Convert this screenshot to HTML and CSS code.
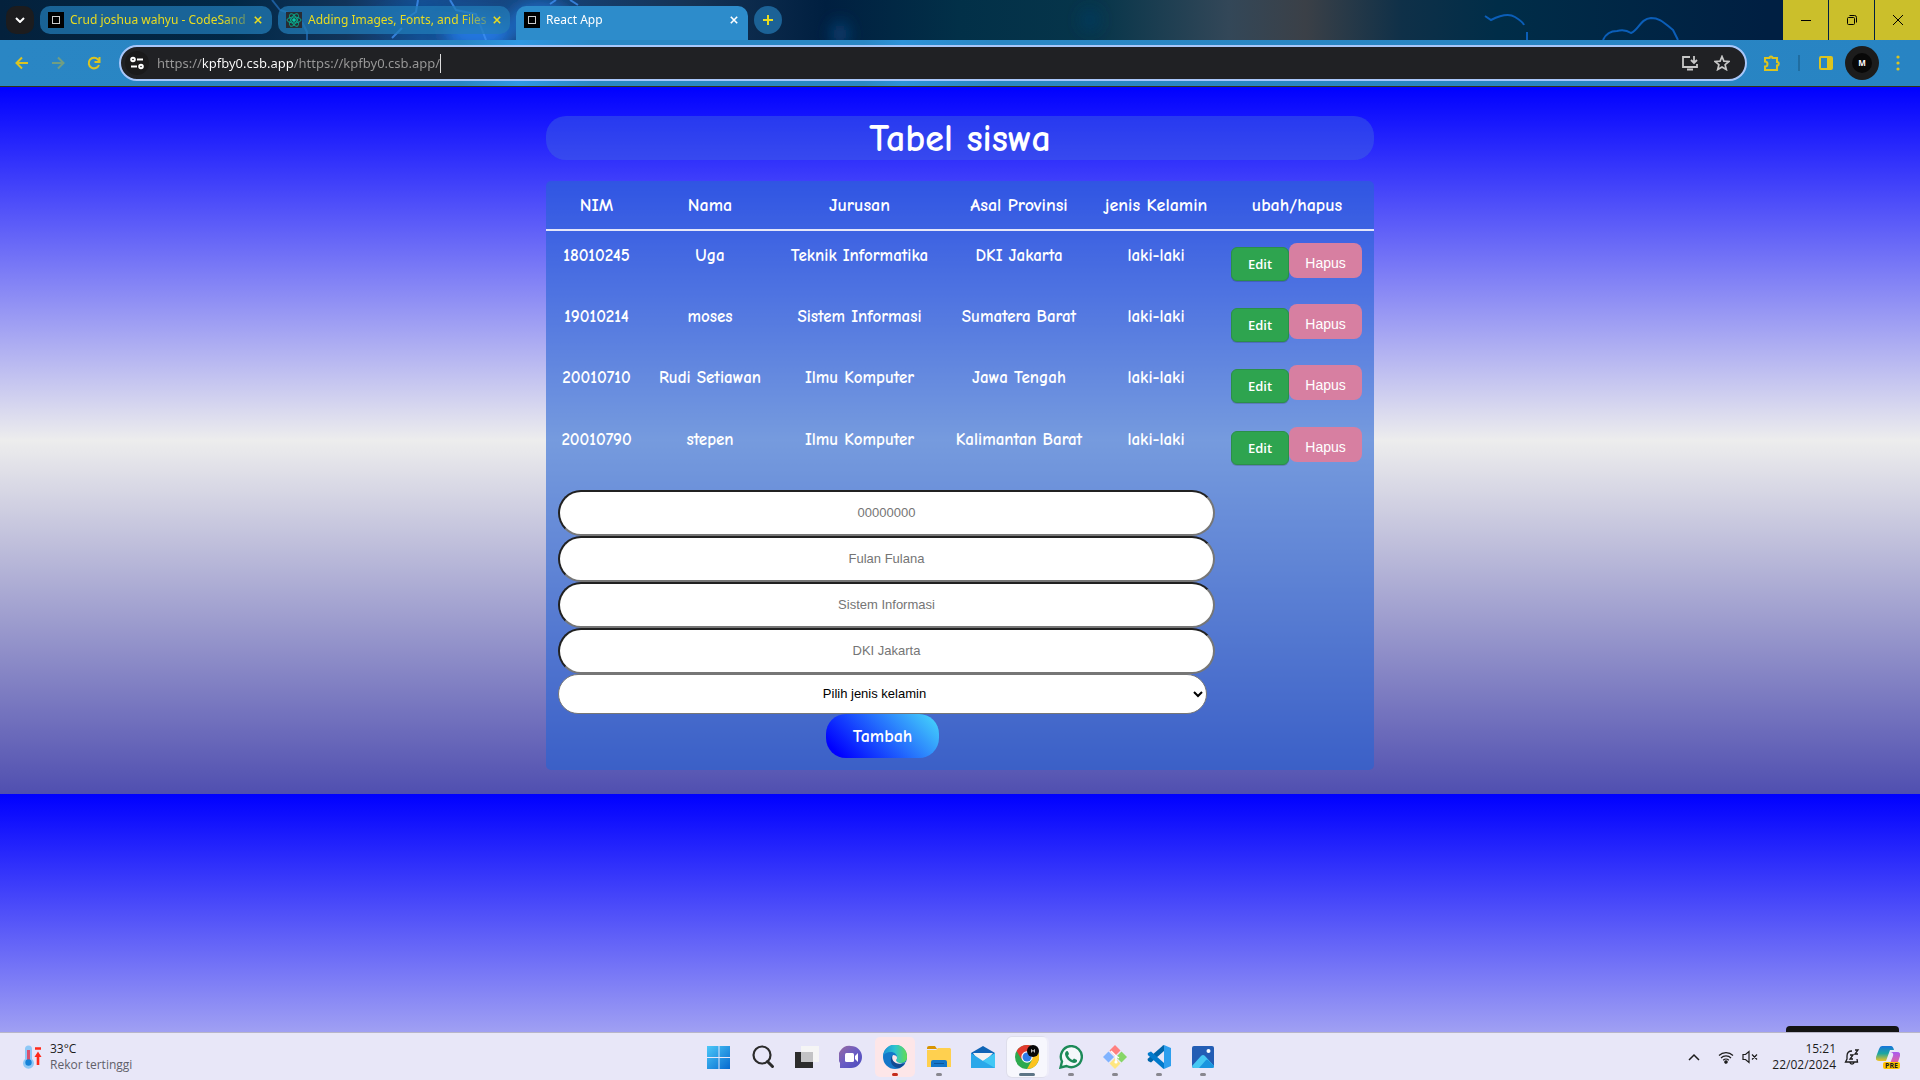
FILE: index.html
```html
<!DOCTYPE html>
<html lang="id">
<head>
<meta charset="utf-8">
<meta name="viewport" content="width=device-width, initial-scale=1">
<title>React App</title>
<link rel="stylesheet" href="styles.css">
</head>
<body>
<header class="browser">
  <svg class="wallpaper" viewBox="0 0 1920 40" preserveAspectRatio="none" aria-hidden="true" fill="none">
    <defs><filter id="soft" x="-50%" y="-50%" width="200%" height="200%"><feGaussianBlur stdDeviation="8"/></filter></defs>
    <g filter="url(#soft)"><ellipse cx="478" cy="34" rx="34" ry="16" fill="#2377e0"/><ellipse cx="420" cy="20" rx="40" ry="10" fill="#0e4f92"/><ellipse cx="540" cy="20" rx="30" ry="18" fill="#1e6dc8"/><ellipse cx="840" cy="34" rx="8" ry="12" fill="#08457c"/><ellipse cx="1090" cy="20" rx="8" ry="10" fill="#033b62"/></g>
    <g stroke="#3f8ff0" stroke-width="2"><path d="M418 0l-2 12-12 8M450 0l6 10 20 4 10 26M550 4l6-4M570 0l8 5M392 38l10-10" opacity=".8"/><path d="M272 0l8 10 12 4M302 22l5 10v8" stroke="#1c5c9c"/><path d="M1485 16l6 4q16-8 24-3t9 8M1527 32v8M1603 40q4-9 14-9 8-2 14 2c8-3 9-14 20-15 10 0 14 6 22 12l5 10" stroke="#0b5eb8"/></g>
  </svg>
  <div class="tabstrip">
    <button class="tab-search" aria-label="Cari tab"><svg width="10" height="6" viewBox="0 0 10 6"><path d="M1 1l4 4 4-4" stroke="#fff" stroke-width="2" fill="none"/></svg></button>
    <nav class="tabs" aria-label="Tab">
      <div class="tab">
        <span class="favicon"></span><a class="tab-title" href="#sandbox">Crud joshua wahyu - CodeSand</a>
        <button class="close" aria-label="Tutup tab"><svg width="10" height="10" viewBox="0 0 10 10"><path d="M1 1l8 8M9 1l-8 8" stroke="currentColor" stroke-width="2"/></svg></button>
      </div>
      <div class="tab">
        <svg width="16" height="16" viewBox="0 0 16 16" fill="none" stroke="#09a88b"><path fill="#282c34" stroke="none" d="M0 0h16v16H0z"/><ellipse cx="8" cy="8" rx="7" ry="3"/><ellipse cx="8" cy="8" rx="7" ry="3" transform="rotate(60 8 8)"/><ellipse cx="8" cy="8" rx="7" ry="3" transform="rotate(120 8 8)"/><circle cx="8" cy="8" r="1.5" fill="#09d3ac"/></svg>
        <a class="tab-title" href="#docs">Adding Images, Fonts, and Files</a>
        <button class="close" aria-label="Tutup tab"><svg width="10" height="10" viewBox="0 0 10 10"><path d="M1 1l8 8M9 1l-8 8" stroke="currentColor" stroke-width="2"/></svg></button>
      </div>
      <div class="tab tab-active">
        <span class="favicon"></span><a class="tab-title" href="#app">React App</a>
        <button class="close" aria-label="Tutup tab"><svg width="10" height="10" viewBox="0 0 10 10"><path d="M1 1l8 8M9 1l-8 8" stroke="currentColor" stroke-width="2"/></svg></button>
      </div>
    </nav>
    <button class="new-tab" aria-label="Tab baru"><svg width="10" height="10" viewBox="0 0 10 10"><path d="M5 0v10M0 5h10" stroke="currentColor" stroke-width="2"/></svg></button>
    <div class="window-buttons">
      <button aria-label="Kecilkan"><svg width="10" height="10" viewBox="0 0 10 10"><path d="M0 5.500h10" stroke="#000"/></svg></button>
      <button aria-label="Pulihkan"><svg width="10" height="10" viewBox="0 0 10 10" fill="none" stroke="#000"><rect x=".5" y="2.500" width="7" height="7" rx="1"/><path d="M2.500.5h5a2 2 0 012 2v5"/></svg></button>
      <button aria-label="Tutup"><svg width="10" height="10" viewBox="0 0 10 10"><path d="M0 0l10 10M10 0L0 10" stroke="#000"/></svg></button>
    </div>
  </div>
  <div class="toolbar">
    <div class="nav-buttons">
      <button aria-label="Kembali"><svg width="16" height="16" viewBox="0 0 16 16" fill="none" stroke="currentColor" stroke-width="2"><path d="M14 8H3M8 2.500L2.500 8 8 13.500"/></svg></button>
      <button class="dim" aria-label="Maju"><svg width="16" height="16" viewBox="0 0 16 16" fill="none" stroke="currentColor" stroke-width="2"><path d="M2 8h11M8 2.500l5.500 5.500L8 13.500"/></svg></button>
      <button aria-label="Muat ulang"><svg width="16" height="16" viewBox="0 0 16 16" fill="none" stroke="currentColor" stroke-width="2"><path d="M13 10a5.300 5.300 0 11-1-5.500L13.500 6M13.500 2v5h-5"/></svg></button>
    </div>
    <div class="omnibox">
      <button class="site-info" aria-label="Informasi situs"><svg width="14" height="14" viewBox="0 0 14 14" fill="none" stroke="#fff" stroke-width="2"><circle cx="3" cy="3.500" r="1.800"/><path d="M7 3.500h6M1 10.500h6"/><circle cx="11" cy="10.500" r="1.800"/></svg></button>
      <input class="url" type="text" aria-label="Alamat" size="46" value="https://kpfby0.csb.app/https://kpfby0.csb.app/"><span class="caret"></span>
      <div class="omnibox-actions">
        <button aria-label="Instal aplikasi"><svg width="16" height="16" viewBox="0 0 16 16" fill="none" stroke="currentColor" stroke-width="1.800"><path d="M8 2H1v10h14V9M12 1v6M9 5l3 3 3-3M5 14.500h6" /></svg></button>
        <button aria-label="Bookmark"><svg width="16" height="16" viewBox="0 0 16 16" fill="none" stroke="currentColor" stroke-width="1.700"><path d="M8 1.500l1.900 4.600 5 .4-3.800 3.200 1.200 4.800L8 11.900l-4.300 2.600 1.200-4.800L1.100 6.500l5-.4z"/></svg></button>
      </div>
    </div>
    <div class="extensions">
      <button aria-label="Ekstensi"><svg width="18" height="18" viewBox="0 0 18 18" fill="none" stroke="currentColor" stroke-width="2"><path d="M2 4h4.500a1.500 1.500 0 013 0H14v4a1.800 1.800 0 010 3.600V16H2v-3.500a2.500 2.500 0 000-5z"/></svg></button>
      <span class="divider"></span>
      <button aria-label="Panel samping"><svg width="14" height="14" viewBox="0 0 14 14"><rect x="1" y="1" width="12" height="12" rx="1" fill="none" stroke="currentColor" stroke-width="2"/><path d="M8 1h5v12H8z" fill="currentColor"/></svg></button>
      <button class="avatar" aria-label="Profil"><span>M</span></button>
      <button aria-label="Menu"><svg width="4" height="16" viewBox="0 0 4 16" fill="currentColor"><circle cx="2" cy="2" r="1.600"/><circle cx="2" cy="8" r="1.600"/><circle cx="2" cy="14" r="1.600"/></svg></button>
    </div>
  </div>
</header>

<main class="page">
  <div class="content">
    <h1>Tabel siswa</h1>
    <section class="card">
      <table>
        <colgroup><col class="c-nim"><col class="c-nama"><col class="c-jurusan"><col class="c-asal"><col class="c-jenis"><col class="c-aksi"></colgroup>
        <thead><tr><th>NIM</th><th>Nama</th><th>Jurusan</th><th>Asal Provinsi</th><th>jenis Kelamin</th><th>ubah/hapus</th></tr></thead>
        <tbody>
          <tr><td>18010245</td><td>Uga</td><td>Teknik Informatika</td><td>DKI Jakarta</td><td>laki-laki</td><td><div class="actions"><button class="edit">Edit</button><button class="delete">Hapus</button></div></td></tr>
          <tr><td>19010214</td><td>moses</td><td>Sistem Informasi</td><td>Sumatera Barat</td><td>laki-laki</td><td><div class="actions"><button class="edit">Edit</button><button class="delete">Hapus</button></div></td></tr>
          <tr><td>20010710</td><td>Rudi Setiawan</td><td>Ilmu Komputer</td><td>Jawa Tengah</td><td>laki-laki</td><td><div class="actions"><button class="edit">Edit</button><button class="delete">Hapus</button></div></td></tr>
          <tr><td>20010790</td><td>stepen</td><td>Ilmu Komputer</td><td>Kalimantan Barat</td><td>laki-laki</td><td><div class="actions"><button class="edit">Edit</button><button class="delete">Hapus</button></div></td></tr>
        </tbody>
      </table>
      <form class="student-form">
        <input type="text" aria-label="NIM" placeholder="00000000">
        <input type="text" aria-label="Nama" placeholder="Fulan Fulana">
        <input type="text" aria-label="Jurusan" placeholder="Sistem Informasi">
        <input type="text" aria-label="Asal Provinsi" placeholder="DKI Jakarta">
        <select aria-label="Jenis kelamin"><option>Pilih jenis kelamin</option></select>
        <button class="add" type="button">Tambah</button>
      </form>
    </section>
  </div>
  <div class="popup-edge"></div>
</main>

<footer class="taskbar">
  <button class="weather">
    <svg width="20" height="24" viewBox="0 0 20 24"><path d="M3 4a3.500 3.500 0 017 0v10a5.500 5.500 0 11-7 0z" fill="#8ec8f6"/><path d="M6.500 5v12" stroke="#d8516e" stroke-width="3"/><circle cx="6.500" cy="17.500" r="3.200" fill="#1683d8"/><path d="M13 3.500h6M16 20V9" stroke="#ff2a1a" stroke-width="2.600"/><path d="M12.500 12L16 6.500l3.500 5.500z" fill="#ff2a1a"/></svg>
    <span class="weather-text"><span>33°C</span><span class="muted">Rekor tertinggi</span></span>
  </button>
  <div class="apps">
    <button class="app" aria-label="Mulai"><svg width="24" height="24" viewBox="0 0 24 24"><defs><linearGradient id="win" x2="1" y2="1"><stop stop-color="#4cc8f8"/><stop offset="1" stop-color="#0669cf"/></linearGradient></defs><path fill="url(#win)" d="M0 1h11.500v11H0zM12.500 1H23v11H12.500zM0 13h11.500v11H0zM12.500 13H23v11H12.500z"/></svg></button>
    <button class="app" aria-label="Cari"><svg width="24" height="24" viewBox="0 0 24 24" fill="none" stroke="#2b2b2b"><circle cx="11" cy="10" r="8.500" stroke-width="2.200"/><path d="M16.500 16.500l5 5" stroke-width="3" stroke-linecap="round"/></svg></button>
    <button class="app" aria-label="Tampilan tugas"><svg width="24" height="24" viewBox="0 0 24 24"><path d="M0 7h18v16H0z" fill="#2c2c2c"/><path d="M6 1h18v16H6z" fill="#f5f5f5"/><path d="M6 7h12v10H6z" fill="#c3c3c5"/></svg></button>
    <button class="app" aria-label="Obrolan"><svg width="24" height="24" viewBox="0 0 24 24"><defs><linearGradient id="chat" x2="1" y2="1"><stop stop-color="#9a6b9e"/><stop offset=".5" stop-color="#6a5cc4"/><stop offset="1" stop-color="#4a4bbd"/></linearGradient></defs><path fill="url(#chat)" d="M12 1a11 11 0 110 22H1v-5A11.200 11.200 0 0112 1z"/><rect x="6" y="8" width="9" height="9" rx="1.500" fill="#fff"/><path d="M16 11l3-3v9l-3-3z" fill="#fff"/></svg></button>
    <button class="app app-alert" aria-label="Edge"><svg width="24" height="24" viewBox="0 0 24 24"><defs><linearGradient id="edgeTop"><stop stop-color="#1b8fd6"/><stop offset=".5" stop-color="#2ec4d0"/><stop offset="1" stop-color="#62dc50"/></linearGradient></defs><circle cx="12" cy="12" r="12" fill="#1477c9"/><path d="M0 11A12 12 0 0124 12c0 5-4 6-7 6-3 0-5-1-4-3 3-4-1-8-5-8-4 0-7 2-8 4z" fill="url(#edgeTop)"/><path d="M9 11c-3 5 0 12 7 12 3-1 6-4 6-5-6 3-12 0-13-7z" fill="#104a94"/><path d="M10 10c-3 5 3 11 11 8l3-1v3l-2-2c-6 1-9-1-9-3 2-2 1-5-3-5z" fill="#fde6e8"/></svg></button>
    <button class="app app-running" aria-label="File Explorer"><svg width="24" height="24" viewBox="0 0 24 24"><path d="M0 3q0-2 2-2h6l2 3H0z" fill="#d99400"/><path d="M0 5h9l2-2h12l1 1v18H0z" fill="#ffd04f"/><path d="M4 22v-5q0-2 2-2h12q2 0 2 2v5z" fill="#1475c8"/><path d="M7 18.500h10" stroke="#0b559c"/></svg></button>
    <button class="app" aria-label="Email"><svg width="24" height="24" viewBox="0 0 24 24"><path d="M0 8l12-7 12 7v15H0z" fill="#0f64b6"/><path d="M2 8h20l-8 9H8z" fill="#f3f3f3"/><path d="M0 8l12 8 12-8v15H0z" fill="#2aa8ea"/><path d="M12 16l12-8v15z" fill="#42c8f5"/></svg></button>
    <button class="app app-active" aria-label="Chrome"><svg width="24" height="24" viewBox="0 0 24 24"><circle cx="12" cy="12" r="12" fill="#2da94f"/><path d="M1.600 6A12 12 0 0122.400 6H12L7 15z" fill="#e33b2e"/><path d="M22.400 6A12 12 0 0112 24l5-9-1-9z" fill="#fcc31e"/><circle cx="12" cy="12" r="5.700" fill="#fff"/><circle cx="12" cy="12" r="4.500" fill="#2f7bea"/><circle cx="18" cy="6" r="6" fill="#080808"/><path d="M16.500 7.500v-3l1.500 2 1.500-2v3" stroke="#bbb" fill="none"/></svg></button>
    <button class="app app-running" aria-label="WhatsApp"><svg width="24" height="24" viewBox="0 0 24 24"><path d="M1.500 22.500l1.500-6A10.500 10.500 0 117.500 21z" fill="#f5f8fb" stroke="#1c8a58" stroke-width="2.400"/><path d="M7 6.500c1-1 2-.5 2.500 1l.5 1.500-1 1.500c1 2 2.500 3.500 4.500 4.500l1.500-1.500 3 1.500c.5 2-1 3-3 3-5-1-8.500-5-9-9 0-1 .3-1.800 1-2.500z" fill="#1c8a58"/></svg></button>
    <button class="app app-running" aria-label="Git"><svg width="24" height="24" viewBox="0 0 24 24"><path d="M12 0l5.500 5.500L12 11 6.500 5.500z" fill="#ff8080"/><path d="M5.500 6.500L11 12l-5.500 5.500L0 12z" fill="#80b3ff"/><path d="M18.500 6.500L24 12l-5.500 5.500L13 12z" fill="#87d667"/><path d="M12 13l5.500 5.500L12 24l-5.500-5.500z" fill="#ffe680"/><path d="M8 6l5 5v6M13 11l3 2" stroke="#fff" stroke-width="1.500" fill="none"/><circle cx="13" cy="17" r="1.600" fill="#fff"/></svg></button>
    <button class="app app-running" aria-label="Visual Studio Code"><svg width="24" height="24" viewBox="0 0 24 24"><path d="M17 0v6L4 17.500l-3-1.500-.5-2L16 .5z" fill="#0065a9"/><path d="M17 24v-6L4 6.500.800 8v2L16 23.500z" fill="#007acc"/><path d="M17 0l7 3v18l-7 3z" fill="#2d9fee"/></svg></button>
    <button class="app app-running" aria-label="Foto"><svg width="24" height="24" viewBox="0 0 24 24"><rect x="1" y="1" width="22" height="22" rx="2" fill="#235db4"/><path d="M1 21l9-10q2-2 4 0l9 10q0 2-2 2H3q-2 0-2-2z" fill="#45c8f3"/><path d="M8 23l7-8q1-1 2 0l6 6q0 2-2 2z" fill="#1995df"/><circle cx="17.500" cy="6" r="2" fill="#fff"/></svg></button>
  </div>
  <div class="tray">
    <button aria-label="Ikon tersembunyi"><svg width="12" height="8" viewBox="0 0 12 8"><path d="M1 7l5-5 5 5" fill="none" stroke="#1c1c1c" stroke-width="1.500"/></svg></button>
    <button class="network" aria-label="Jaringan dan suara">
      <svg width="16" height="14" viewBox="0 0 16 14" fill="none" stroke="#1c1c1c" stroke-width="1.200"><path d="M1 5.500a10 10 0 0114 0M3 8a7 7 0 0110 0M5.200 10.300a4 4 0 015.600 0"/><circle cx="8" cy="12" r="1.200" fill="#1c1c1c"/></svg>
      <svg width="16" height="14" viewBox="0 0 16 14" fill="none" stroke="#1c1c1c" stroke-width="1.200"><path d="M1 4.500h2.500L7 1.500v11L3.500 9.500H1zM10 4.500l5 5M15 4.500l-5 5"/></svg>
    </button>
    <button class="clock"><span>15:21</span><span>22/02/2024</span></button>
    <button aria-label="Notifikasi"><svg width="16" height="16" viewBox="0 0 16 16" fill="none" stroke="#1c1c1c" stroke-width="1.300"><path d="M8 2C4 2 3 5 3 7v3l-1.500 3h12L13 10M6 13.500c0 2 4 2 4 0M6 6h3L6 10h3M11 1h3l-3 4h3"/></svg></button>
    <button class="copilot" aria-label="Copilot"><svg width="24" height="24" viewBox="0 0 24 24"><defs><linearGradient id="cpA" x2="0" y2="1"><stop stop-color="#1674dc"/><stop offset=".5" stop-color="#1ca6a0"/><stop offset="1" stop-color="#f2c321"/></linearGradient><linearGradient id="cpB" x2="0" y2="1"><stop stop-color="#a95af0"/><stop offset="1" stop-color="#f1678a"/></linearGradient></defs><path d="M6 1h9q2 0 3 4h-4l-4 11H3q-4 0-3-4L3 4q1-3 3-3z" fill="url(#cpA)"/><path d="M14 7h7q4 0 3 4l-3 9h-9q2 0 3-4l2-5q1-4-3-4z" fill="url(#cpB)"/></svg><span class="badge">PRE</span></button>
  </div>
</footer>
</body>
</html>
```
FILE: styles.css
```css
* { box-sizing: border-box; }
body {
  margin: 0;
  min-height: 100vh;
  display: flex;
  flex-direction: column;
  font-family: "Segoe UI", "Open Sans", sans-serif;
  font-size: 12px;
}
button { border: 0; padding: 0; background: none; font: inherit; color: inherit; }
svg { display: block; flex: none; }
a { color: inherit; text-decoration: none; }

/* Browser frame */
.browser {
  position: relative;
  color: #e9dc20;
  background: linear-gradient(90deg, #04213c 0, #012846 12%, #11345a 18%, #164f94 22%, #153355 36%, #001f40 43%, #023048 50%, #06354a 57%, #334758 64%, #3b4047 68%, #0f3048 73%, #002d48 78%, #001f42 92%);
}
.wallpaper { position: absolute; inset: 0; width: 100%; height: 40px; }
.tabstrip { position: relative; display: flex; height: 40px; padding-left: 6px; }
.tab-search, .new-tab {
  display: grid;
  place-items: center;
  width: 28px;
  height: 28px;
  margin-top: 6px;
  border-radius: 10px;
  background: #1c1c1e;
}
.new-tab { border-radius: 50%; background: #1c6296; margin-left: 6px; }
.tabs { display: flex; gap: 6px; margin-left: 6px; padding-top: 6px; }
.tab {
  display: flex;
  align-items: center;
  width: 232px;
  height: 28px;
  padding: 0 10px 0 8px;
  gap: 6px;
  border-radius: 10px;
  background: rgba(35, 125, 185, .72);
}
.tab-active { height: 34px; padding-bottom: 6px; border-radius: 10px 10px 0 0; background: #2d8ccb; color: #fff; }
.favicon { flex: none; width: 16px; height: 16px; border: 4px solid #000; background: #000; outline: 1px solid #ccc; outline-offset: -5px; }
.tab-title {
  flex: 1;
  white-space: nowrap;
  line-height: 20px;
  font-family: "Segoe UI", "Noto Sans", sans-serif;
  -webkit-mask-image: linear-gradient(90deg, #000 85%, rgba(0, 0, 0, .3));
  mask-image: linear-gradient(90deg, #000 85%, rgba(0, 0, 0, .3));
}
.close svg { width: 8px; height: 8px; }
.window-buttons { display: flex; gap: 1px; margin-left: auto; }
.window-buttons button { display: grid; place-items: center; width: 45px; background: #cbbf2b; }
.toolbar {
  position: relative;
  display: flex;
  align-items: center;
  height: 47px;
  padding: 0 20px 0 14px;
  color: #dcc420;
  background: linear-gradient(90deg, #2a86c4 0, #2885c3 24%, #2f98e4 27%, #2a87c4 31%, #2a87c4 45%, #2d92d8 47%, #2a87c4 52%, #2884c3);
  border-bottom: 1px solid #333319;
}
.nav-buttons { display: flex; gap: 20px; width: 105px; }
.dim { opacity: .4; }
.omnibox {
  flex: 1;
  display: flex;
  align-items: center;
  height: 36px;
  padding: 0 15px 0 4px;
  border: 2px solid #a8c7fa;
  border-radius: 18px;
  background: #202124;
}
.site-info { display: grid; place-items: center; width: 24px; height: 24px; margin-right: 8px; border-radius: 50%; background: #1a1a1b; }
.url {
  field-sizing: content;
  border: 0;
  padding: 0;
  outline: 0;
  font: 13px/20px "Segoe UI", "Noto Sans", sans-serif;
  color: transparent;
  background: linear-gradient(90deg, #9a9a9a 0 46px, #fff 46px 137px, #9a9a9a 137px);
  -webkit-background-clip: text;
  background-clip: text;
}
.caret { width: 1px; height: 19px; background: #ddd; }
.omnibox-actions { display: flex; gap: 16px; margin-left: auto; color: #c8c8c8; }
.extensions { display: flex; align-items: center; margin-left: 16px; }
.divider { width: 2px; height: 16px; margin: 0 19px 0 17px; background: #1f6da1; }
.avatar { display: grid; place-items: center; width: 34px; height: 34px; margin: 0 17px 0 12px; border-radius: 50%; background: #1c1c1c; }
.avatar span { width: 20px; border-radius: 50%; background: #080808; color: #fff; font-size: 8px; font-weight: 700; line-height: 20px; }

/* Student table page */
.page {
  position: relative;
  flex: 1;
  padding: 29px 16px 24px;
  background: linear-gradient(#0000ff, #ededed 50%, #504fb0) 0 0 / 100% 707px;
  color: #fff;
  font-family: "Comic Sans MS", "Comic Neue", "Open Sans", sans-serif;
  font-size: 17px;
  font-weight: 700;
}
.content { max-width: 828px; margin: 0 auto; }
h1 { margin: 0 0 21px; padding-top: 2px; border-radius: 20px; background: rgba(65, 105, 225, .45); font-size: 38px; line-height: 42px; text-align: center; }
.card { padding-bottom: 12px; border-radius: 5px; background: rgba(38, 100, 212, .6); overflow: hidden; }
table { width: 100%; table-layout: fixed; border-collapse: collapse; text-align: center; }
.c-nim { width: 101px; }
.c-nama { width: 126px; }
.c-jurusan { width: 173px; }
.c-asal { width: 146px; }
.c-jenis { width: 128px; }
th, td { padding: 0; line-height: 26px; white-space: nowrap; }
th { height: 49px; padding-top: 2px; border-bottom: 2px solid #e4e6fa; font-size: 18px; }
td { height: 61px; padding-top: 12px; vertical-align: top; }
tbody tr:nth-child(odd) td { height: 62px; }
.actions { display: flex; padding-left: 11px; font-family: "Liberation Sans", Arial, sans-serif; }
.edit { width: 58px; height: 34px; margin-top: 4px; border: 1px solid #2b8f49; border-radius: 6px; background: #2ea44f; box-shadow: 0 1px 0 rgba(27, 31, 35, .2); font: 600 13px/20px "Segoe UI", "Open Sans", sans-serif; }
.delete { width: 73px; height: 35px; padding-top: 4px; border-radius: 8px; background: #d77fa1; font-size: 14px; font-weight: 400; }
.student-form { display: flex; flex-direction: column; align-items: center; width: 657px; max-width: 100%; margin: 14px 0 0 12px; }
.student-form input, .student-form select {
  width: 100%;
  height: 46px;
  border: 2px inset #767676;
  border-radius: 23px;
  background: #fff;
  text-align: center;
  font: 13px/20px "Liberation Sans", Arial, sans-serif;
}
.student-form input { padding: 0 2px 2px; }
.student-form select { align-self: flex-start; width: 649px; max-width: 100%; height: 40px; padding: 0 6px 2px 2px; border: 1px solid #767676; border-radius: 20px; color: #000; }
.student-form input::placeholder { color: #757575; }
.add { width: 113px; height: 44px; margin-right: 8px; border-radius: 20px; background: linear-gradient(45deg, #0000ff 10%, #48dbfb); font-size: 18px; }
.popup-edge { position: absolute; right: 21px; bottom: 0; width: 113px; height: 6px; border-radius: 4px 4px 0 0; background: #141414; }

/* Taskbar */
.taskbar {
  display: grid;
  grid-template-columns: 1fr auto 1fr;
  align-items: center;
  height: 48px;
  border-top: 1px solid #b8b6c8;
  background: #e8e7f8;
  color: #1c1c1c;
}
.weather { display: flex; align-items: center; justify-self: start; gap: 8px; padding-left: 22px; text-align: left; line-height: 16px; }
.weather-text, .clock { display: flex; flex-direction: column; }
.muted { color: #606068; }
.apps { display: flex; gap: 4px; padding-left: 2px; }
.app { position: relative; display: grid; place-items: center; width: 40px; height: 40px; border-radius: 5px; }
.app-alert { background: #fde6e8; }
.app-active { background: #f7f7fd; box-shadow: 2px 0 0 #eeedf9, 0 0 0 1px #dedeeb; }
.app-running::after, .app-alert::after, .app-active::after { content: ""; position: absolute; bottom: 1px; left: 17px; width: 6px; height: 3px; border-radius: 2px; background: #88878f; }
.app-alert::after { background: #c42b1c; }
.app-active::after { left: 12px; width: 16px; background: #5d7586; }
.tray { display: flex; align-items: center; justify-self: end; padding-right: 20px; }
.network { display: flex; gap: 8px; margin: 0 14px 0 18px; }
.clock { margin-right: 8px; text-align: right; line-height: 16px; }
.copilot { position: relative; margin-left: 16px; }
.badge { position: absolute; right: 0; bottom: 0; padding: 0 2px; border-radius: 2px; background: #ffc400; font-size: 7px; font-weight: 700; line-height: 7px; }
```
